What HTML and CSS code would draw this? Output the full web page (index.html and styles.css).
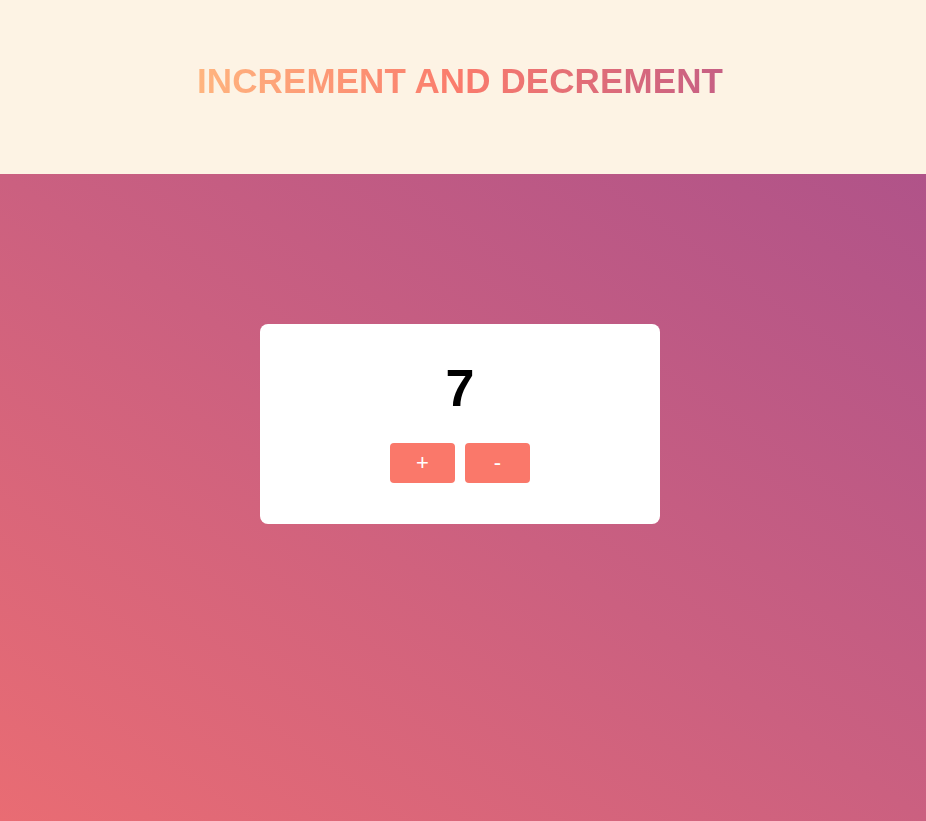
FILE: index.html
```html
<!DOCTYPE html>
<html lang="en">
<head>
<meta charset="utf-8">
<title>Increment and Decrement</title>
<link rel="stylesheet" href="styles.css">
</head>
<body>
<header class="header">
  <h1 class="title">INCREMENT AND DECREMENT</h1>
</header>
<main class="main">
  <div class="card">
    <div class="count">7</div>
    <div class="buttons">
      <button class="btn">+</button>
      <button class="btn">-</button>
    </div>
  </div>
</main>
</body>
</html>
```
FILE: styles.css
```css
html, body {
  margin: 0;
  padding: 0;
  height: 100%;
}
body {
  font-family: "Liberation Sans", Arial, sans-serif;
  display: flex;
  flex-direction: column;
}
.header {
  height: 174px;
  box-sizing: border-box;
  background: #fdf3e4;
  padding: 61px 6px 0 0;
  display: flex;
  justify-content: center;
  align-items: flex-start;
}
.title {
  margin: 0;
  font-size: 35px;
  font-weight: bold;
  line-height: 40px;
  letter-spacing: 0.1px;
  background: linear-gradient(to right, #ffb57f, #fa7b6c 50%, #c65f84);
  -webkit-background-clip: text;
  background-clip: text;
  color: transparent;
}
.main {
  flex: 1;
  background: linear-gradient(to top right, #e96c73, #cb6080 50%, #b05389);
  display: flex;
  justify-content: center;
  align-items: flex-start;
  padding: 150px 6px 0 0;
}
.card {
  width: 400px;
  height: 200px;
  box-sizing: border-box;
  background: #fff;
  border-radius: 8px;
  padding-top: 34px;
  display: flex;
  flex-direction: column;
  align-items: center;
}
.count {
  font-size: 52px;
  font-weight: bold;
  line-height: 60px;
  color: #000;
}
.buttons {
  margin-top: 25px;
  display: flex;
  gap: 10px;
}
.btn {
  width: 65px;
  height: 40px;
  border: none;
  border-radius: 4px;
  background: #fa786a;
  color: #fff;
  font-family: "Liberation Sans", Arial, sans-serif;
  font-size: 22px;
  padding: 0;
  cursor: pointer;
}
```
